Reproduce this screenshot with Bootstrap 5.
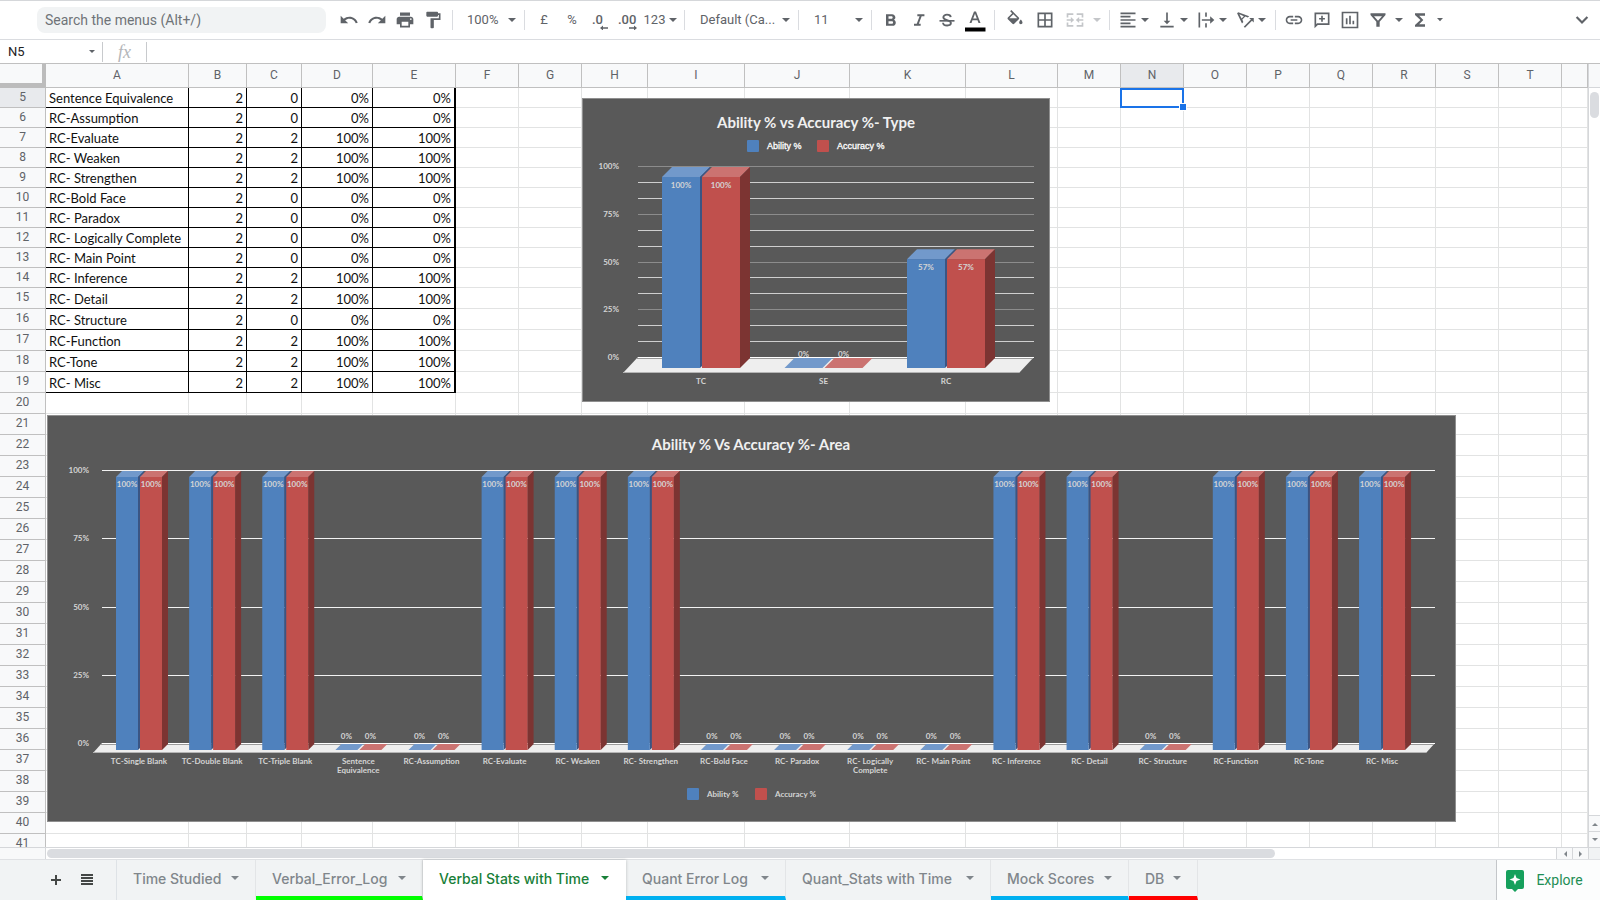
<!DOCTYPE html>
<html lang="en">
<head>
<meta charset="utf-8">
<meta name="viewport" content="width=device-width, initial-scale=1">
<title>Verbal Stats with Time</title>
<link href="https://cdn.jsdelivr.net/npm/bootstrap@5.3.0/dist/css/bootstrap.min.css" rel="stylesheet">
<style>
  body { font-family: Roboto, "Liberation Sans", sans-serif; font-size: 14px; color: #5f6368; }
  button, select, input { font-family: inherit; }
  .plain { border: 0; background: none; padding: 0; color: inherit; display: flex; align-items: center; justify-content: center; }

  /* toolbar */
  .toolbar { height: 40px; border-top: 1px solid #d5d7da; border-bottom: 1px solid #dadce0; padding-left: 37px; }
  .menu-search { width: 289px; height: 26px; border: 0; border-radius: 8px; background: #f1f3f4; padding: 0 8px; font-size: 14px; line-height: 26px; margin-right: 9px; color: #5f6368; }
  .menu-search::placeholder { color: #6f7378; opacity: 1; }
  .tool { width: 28px; height: 28px; flex: none; font-size: 13px; }
  .tool-wide { width: 30px; }
  .tool-split { width: 39px; justify-content: flex-start; padding-left: 3px; }
  .tool-num { width: 37px; }
  .tool-caret { width: 14px; }
  .tool-more { width: 36px; }
  .tool svg { width: 20px; height: 20px; fill: currentColor; flex: none; }
  .tool svg.tri { width: 8px; height: 4px; }
  .tool-split svg.tri { margin-left: 3px; }
  .tool.dim { color: #c4c6c9; }
  .tb-sep { width: 1px; height: 20px; background: #dadce0; margin: 0 5px; flex: none; }
  .picker { appearance: none; border: 0; background: url("data:image/svg+xml,%3Csvg xmlns='http://www.w3.org/2000/svg' viewBox='0 0 8 4'%3E%3Cpath d='M0 0h8L4 4z' fill='%235f6368'/%3E%3C/svg%3E") no-repeat right 3px center / 8px 4px; color: #5f6368; font-size: 13px; padding: 0 14px 0 10px; height: 28px; flex: none; }
  .picker-zoom { width: 61px; padding-left: 9px; }
  .picker-font { width: 103px; }
  .picker-size { width: 62px; }

  /* formula bar */
  .formula { height: 24px; border-bottom: 1px solid #c0c0c0; }
  .name-box { width: 102px; height: 22px; background-position: right 7px center; background-size: 6px 3px; color: #222; font-size: 13px; padding-left: 8px; }
  .formula .bar { width: 1px; height: 20px; background: #c8cacd; }
  .fx { width: 43px; font: italic 18px/20px "Liberation Serif", serif; color: #b4b6b9; text-align: center; }
  .formula input { border: 0; outline: 0; height: 20px; }

  /* grid */
  .sheet { overflow: hidden; border-bottom: 1px solid #d5d7da; }
  .cells { table-layout: fixed; width: 100%; border-collapse: separate; border-spacing: 0; }
  .cells th { background: #f8f9fa; font-weight: 400; font-size: 12px; line-height: 10px; text-align: center; vertical-align: top; padding: 4px 0 0; border-right: 1px solid #c0c0c0; border-bottom: 1px solid #c0c0c0; }
  .cells thead th { height: 24px; padding-top: 6px; }
  .cells th.picked { background: #e8eaed; }
  .cells thead th.corner { border-right: 4px solid #bcbcbc; border-bottom: 5px solid #bcbcbc; }
  .cells td { height: 20px; padding: 0 3px; line-height: 18px; vertical-align: bottom; white-space: nowrap; overflow: hidden; border-right: 1px solid #e2e3e3; border-bottom: 1px solid #e2e3e3; font-family: Lato, sans-serif; font-size: 13px; color: #111; }
  .cells tr.tall td { height: 21px; }
  .cells td.filled { border-color: #000; }
  .cells td.edge { border-right: 2px solid #000; }
  .cells td.num { text-align: right; }
  .cells td.active-cell { position: relative; overflow: visible; }
  .cells td.active-cell::before { content: ""; position: absolute; inset: 0 -1px -1px -1px; border: 2px solid #1a73e8; }
  .cells td.active-cell::after { content: ""; position: absolute; right: -4px; bottom: -4px; width: 6px; height: 6px; background: #1a73e8; border: 1px solid #fff; box-sizing: content-box; }
  .chart-object { position: absolute; background: #595959; border: 1px solid #8f8f8f; }
  .chart-object svg { display: block; }
  .chart-type { left: 582px; top: 34px; }
  .chart-area { left: 47px; top: 351px; }
  .chart-object text { font-family: Lato, sans-serif; font-size: 8px; font-weight: 700; fill: #d4d4d4; }
  .chart-object .heading { font-size: 15px; font-weight: 700; fill: #f0f0f0; }
  .chart-object .key { font-family: "Liberation Sans", sans-serif; font-size: 9px; font-weight: 400; fill: #fff; stroke: #fff; stroke-width: .3px; }

  /* scrollbars */
  .v-scroll { width: 12px; border-left: 1px solid #d5d7da; border-bottom: 1px solid #d5d7da; background: #fff; }
  .v-head { height: 24px; background: #f8f9fa; border-bottom: 1px solid #d5d7da; }
  .thumb { background: #dadce0; border-radius: 6px; }
  .v-scroll .thumb { width: 9px; height: 26px; margin: 4px 1px; }
  .v-scroll .plain { height: 16px; border-top: 1px solid #d5d7da; background: #f8f9fa; }
  .h-scroll { height: 12px; border-bottom: 1px solid #dfe1e4; }
  .h-head { width: 46px; background: #f8f9fa; border-right: 1px solid #d5d7da; }
  .h-scroll .thumb { width: 81.3%; height: 9px; margin: 1px; }
  .h-scroll .plain { width: 16px; border-left: 1px solid #d5d7da; background: #f8f9fa; }
  .h-end { width: 12px; border-left: 1px solid #d5d7da; background: #f1f3f4; }
  .v-scroll svg, .h-scroll svg { width: 6px; height: 6px; fill: #80868b; }

  /* sheet tabs */
  .tabs { height: 40px; background: #f1f3f4; }
  .tab-tools { width: 117px; padding-left: 40px; }
  .tab-tools .plain { width: 31px; }
  .sheet-tab { --mark-color: transparent; font-family: Inter, Roboto, sans-serif; font-size: 14px; font-weight: 500; color: #80868b; padding: 0 16px; justify-content: space-between; border-right: 1px solid #e3e5e7; border-bottom: 4px solid var(--mark-color); white-space: nowrap; }
  .sheet-tab svg { width: 8px; height: 4px; fill: currentColor; }
  .sheet-tab.current { background: #fff; color: #188038; border-color: #fff; box-shadow: 0 0 3px rgba(60,64,67,.3); }
  .mark-green { --mark-color: #00ff00; }
  .mark-blue { --mark-color: #00b0f0; }
  .mark-red { --mark-color: #ff0000; }
  .explore { width: 104px; background: #fcfdfd; border-left: 1px solid #c4c6c9; color: #1e8e55; font-size: 14px; gap: 12px; padding: 1px 8px 0 0; }
</style>
</head>
<body class="vh-100 d-flex flex-column overflow-hidden bg-white">

<header class="toolbar d-flex align-items-center flex-shrink-0">
  <input class="menu-search" type="text" placeholder="Search the menus (Alt+/)" aria-label="Search the menus">
  <button class="plain tool" aria-label="Undo"><svg viewBox="0 0 24 24"><path d="M12.5 8c-2.650 0-5.050.99-6.900 2.600L2 7v9h9l-3.620-3.620c1.390-1.160 3.160-1.880 5.120-1.880 3.540 0 6.550 2.310 7.600 5.500l2.370-.78C21.080 11.030 17.150 8 12.500 8z"/></svg></button>
  <button class="plain tool" aria-label="Redo"><svg viewBox="0 0 24 24"><path d="M18.400 10.600C16.550 8.990 14.150 8 11.500 8c-4.650 0-8.580 3.030-9.960 7.220L3.900 16c1.050-3.190 4.050-5.500 7.600-5.500 1.950 0 3.730.72 5.120 1.880L13 16h9V7l-3.600 3.600z"/></svg></button>
  <button class="plain tool" aria-label="Print"><svg viewBox="0 0 24 24"><path d="M19 8H5c-1.660 0-3 1.340-3 3v6h4v4h12v-4h4v-6c0-1.660-1.340-3-3-3zm-3 11H8v-5h8v5zm3-7c-.55 0-1-.45-1-1s.45-1 1-1 1 .45 1 1-.45 1-1 1zm-1-9H6v4h12V3z"/></svg></button>
  <button class="plain tool" aria-label="Paint format"><svg viewBox="0 0 24 24"><path d="M18 4V3c0-.55-.45-1-1-1H5c-.55 0-1 .45-1 1v4c0 .55.45 1 1 1h12c.55 0 1-.45 1-1V6h1v4H9v11c0 .55.45 1 1 1h2c.55 0 1-.45 1-1v-9h8V4h-3z"/></svg></button>
  <span class="tb-sep"></span>
  <select class="picker picker-zoom" aria-label="Zoom"><option>100%</option></select>
  <span class="tb-sep"></span>
  <button class="plain tool" aria-label="Format as currency">£</button>
  <button class="plain tool" aria-label="Format as percent">%</button>
  <button class="plain tool" aria-label="Decrease decimal places"><svg viewBox="0 0 20 20"><text x="2" y="14" font-size="13" font-weight="500">.0</text><path d="M10 18l3-2.500v1.800h5v1.400h-5v1.800z"/></svg></button>
  <button class="plain tool" aria-label="Increase decimal places"><svg viewBox="0 0 20 20"><text x="0" y="14" font-size="13" font-weight="500">.00</text><path d="M19 18l-3-2.500v1.800h-5v1.400h5v1.800z"/></svg></button>
  <button class="plain tool tool-num" aria-label="More formats">123<svg class="tri ms-1" viewBox="0 0 8 4"><path d="M0 0h8L4 4z"/></svg></button>
  <span class="tb-sep"></span>
  <select class="picker picker-font" aria-label="Font"><option>Default (Ca...</option></select>
  <span class="tb-sep"></span>
  <select class="picker picker-size" aria-label="Font size"><option>11</option></select>
  <span class="tb-sep"></span>
  <button class="plain tool" aria-label="Bold"><svg viewBox="0 0 24 24"><path d="M15.600 11.790c.97-.67 1.650-1.770 1.650-2.790 0-2.260-1.750-4-4-4H6v14h8.040c2.090 0 3.710-1.700 3.710-3.790 0-1.520-.86-2.820-2.150-3.420zM9 7.500h3.500c.83 0 1.500.67 1.500 1.500s-.67 1.500-1.500 1.500H9v-3zm4 9H9v-3h4c.83 0 1.500.67 1.500 1.500s-.67 1.500-1.500 1.500z"/></svg></button>
  <button class="plain tool" aria-label="Italic"><svg viewBox="0 0 24 24"><path d="M10 5v2.500h2.700l-3.400 9H6V19h8v-2.500h-2.200l3.400-9H18.500V5z"/></svg></button>
  <button class="plain tool" aria-label="Strikethrough"><svg viewBox="0 0 24 24"><path d="M3 12h18v2H3z"/><path d="M16.500 8.600C16.300 6.700 14.600 5.600 12 5.600S7.600 6.900 7.600 8.800c0 1.600 1.400 2.600 4.400 3.400s4.700 1.700 4.700 3.500c0 1.700-1.700 2.900-4.500 2.900s-4.900-1.200-5-3.300" fill="none" stroke="currentColor" stroke-width="2.200"/></svg></button>
  <button class="plain tool" aria-label="Text colour"><svg viewBox="0 0 20 20" overflow="visible"><path d="M9 1.500h2L15.500 13h-2l-1-2.800h-5l-1 2.800h-2zM10 3.800L8.200 8.600h3.600z"/><path d="M0 17.500h20.500v4H0z" fill="#000"/></svg></button>
  <span class="tb-sep"></span>
  <button class="plain tool tool-wide" aria-label="Fill colour"><svg viewBox="0 0 24 24"><path d="M16.560 8.940L7.620 0 6.210 1.410l2.380 2.380-5.150 5.150c-.59.59-.59 1.540 0 2.120l5.500 5.500c.29.29.68.44 1.060.44s.77-.15 1.060-.44l5.500-5.500c.59-.58.59-1.530 0-2.120zM5.210 10L10 5.210 14.790 10H5.210zM19 11.500s-2 2.170-2 3.500c0 1.100.9 2 2 2s2-.9 2-2c0-1.330-2-3.500-2-3.500z"/></svg></button>
  <button class="plain tool tool-wide" aria-label="Borders"><svg viewBox="0 0 24 24"><path d="M3 3v18h18V3H3zm8 16H5v-6h6v6zm0-8H5V5h6v6zm8 8h-6v-6h6v6zm0-8h-6V5h6v6z"/></svg></button>
  <button class="plain tool tool-wide dim" aria-label="Merge cells"><svg viewBox="0 0 24 24"><path d="M2 4h8v2H4v3H2zM22 4h-8v2h6v3h2zM2 20h8v-2H4v-3H2zM22 20h-8v-2h6v-3h2zM2 11h5V8.500l4 3.500-4 3.500V13H2zM22 11h-5V8.500L13 12l4 3.500V13h5z"/></svg></button>
  <button class="plain tool tool-caret dim" aria-label="Merge type"><svg class="tri" viewBox="0 0 8 4"><path d="M0 0h8L4 4z"/></svg></button>
  <span class="tb-sep"></span>
  <button class="plain tool tool-split" aria-label="Horizontal align"><svg viewBox="0 0 24 24"><path d="M15 15H3v2h12v-2zm0-8H3v2h12V7zM3 13h18v-2H3v2zm0 8h18v-2H3v2zM3 3v2h18V3H3z"/></svg><svg class="tri" viewBox="0 0 8 4"><path d="M0 0h8L4 4z"/></svg></button>
  <button class="plain tool tool-split" aria-label="Vertical align"><svg viewBox="0 0 24 24"><path d="M16 13h-3V3h-2v10H8l4 4 4-4zM4 19v2h16v-2H4z"/></svg><svg class="tri" viewBox="0 0 8 4"><path d="M0 0h8L4 4z"/></svg></button>
  <button class="plain tool tool-split" aria-label="Text wrapping"><svg viewBox="0 0 24 24"><path d="M3 3h2v18H3zM11 3h2v5h-2zM11 16h2v5h-2zM7 11h10V7.500l5 4.500-5 4.500V13H7z"/></svg><svg class="tri" viewBox="0 0 8 4"><path d="M0 0h8L4 4z"/></svg></button>
  <button class="plain tool tool-split" aria-label="Text rotation"><svg viewBox="0 0 24 24"><path d="M2.500 4l1.400-1.400L17 7.500l-1.600 1.600-3-1.200-3.600 3.600 1.200 3-1.600 1.600zM5.300 5.200l2.600 4.900 2.700-2.700zM10.500 20L19 11.500 17 9.500h5.500V15l-2.100-2.100L12 21.400z"/></svg><svg class="tri" viewBox="0 0 8 4"><path d="M0 0h8L4 4z"/></svg></button>
  <span class="tb-sep ms-1 me-1"></span>
  <button class="plain tool" aria-label="Insert link"><svg viewBox="0 0 24 24"><path d="M3.900 12c0-1.710 1.390-3.100 3.100-3.100h4V7H7c-2.760 0-5 2.240-5 5s2.240 5 5 5h4v-1.900H7c-1.710 0-3.100-1.390-3.100-3.100zM8 13h8v-2H8v2zm9-6h-4v1.900h4c1.710 0 3.100 1.390 3.100 3.100s-1.390 3.100-3.100 3.100h-4V17h4c2.760 0 5-2.240 5-5s-2.240-5-5-5z"/></svg></button>
  <button class="plain tool" aria-label="Insert comment"><svg viewBox="0 0 24 24"><path fill-rule="evenodd" d="M3 3h18v15H7l-4 4zM5 5v12l1-1h13V5zM11 7h2v2.500h2.500v2H13V14h-2v-2.500H8.500v-2H11z"/></svg></button>
  <button class="plain tool" aria-label="Insert chart"><svg viewBox="0 0 24 24"><path fill-rule="evenodd" d="M2 2h20v20H2zM4 4v16h16V4zM7 10h2v7H7zM11 7h2v10h-2zM15 13h2v4h-2z"/></svg></button>
  <button class="plain tool" aria-label="Create a filter"><svg viewBox="0 0 24 24"><path fill-rule="evenodd" d="M3 4h18v2l-7 8v6h-4v-6L3 6zM7.200 7.500l4.800 5.400 4.800-5.400z"/></svg></button>
  <button class="plain tool tool-caret" aria-label="Filter views"><svg class="tri" viewBox="0 0 8 4"><path d="M0 0h8L4 4z"/></svg></button>
  <button class="plain tool" aria-label="Functions"><svg viewBox="0 0 24 24"><path d="M18 4H6v2l6.500 6L6 18v2h12v-3h-7l5-5-5-5h7z"/></svg></button>
  <button class="plain tool tool-caret" aria-label="More functions"><svg class="tri" viewBox="0 0 12 6"><path d="M0 0h9L4.500 5z"/></svg></button>
  <button class="plain tool tool-more ms-auto" aria-label="Hide the menus"><svg viewBox="0 0 24 24"><path d="M5.500 8.500L12 15l6.500-6.500" fill="none" stroke="currentColor" stroke-width="2.600"/></svg></button>
</header>

<div class="formula d-flex align-items-center flex-shrink-0">
  <select class="picker name-box" aria-label="Name box"><option>N5</option></select>
  <span class="bar"></span>
  <label class="fx" for="formula">fx</label>
  <span class="bar"></span>
  <input id="formula" class="flex-fill" type="text">
</div>

<main class="d-flex flex-fill overflow-hidden">
  <div class="sheet position-relative flex-fill">
    <table class="cells" id="cells"></table>
    <figure class="chart-object chart-type m-0" id="chartType"></figure>
    <figure class="chart-object chart-area m-0" id="chartArea"></figure>
  </div>
  <div class="v-scroll d-flex flex-column flex-shrink-0">
    <div class="v-head"></div>
    <div class="thumb"></div>
    <button class="plain mt-auto" aria-label="Scroll up"><svg viewBox="0 0 6 6"><path d="M0 5h6L3 2z"/></svg></button>
    <button class="plain" aria-label="Scroll down"><svg viewBox="0 0 6 6"><path d="M0 1h6L3 4z"/></svg></button>
  </div>
</main>

<div class="h-scroll d-flex flex-shrink-0">
  <div class="h-head"></div>
  <div class="flex-fill"><div class="thumb"></div></div>
  <button class="plain" aria-label="Scroll left"><svg viewBox="0 0 6 6"><path d="M5 0v6L2 3z"/></svg></button>
  <button class="plain" aria-label="Scroll right"><svg viewBox="0 0 6 6"><path d="M1 0v6l3-3z"/></svg></button>
  <div class="h-end"></div>
</div>

<footer class="tabs d-flex flex-shrink-0">
  <div class="tab-tools d-flex border-end">
    <button class="plain" aria-label="Add sheet"><svg width="12" height="12" viewBox="0 0 12 12"><path d="M5 1h2v4h4v2H7v4H5V7H1V5h4z" fill="#444746"/></svg></button>
    <button class="plain" aria-label="All sheets"><svg width="12" height="12" viewBox="0 0 12 12"><path d="M0 0h12v2H0zM0 3h12v2H0zM0 6h12v2H0zM0 9h12v2H0z" fill="#444746"/></svg></button>
  </div>
  <nav class="d-flex" id="tabs" aria-label="Sheets"></nav>
  <button class="plain explore ms-auto"><svg width="18" height="22" viewBox="0 0 18 22"><path d="M2 0h14a2 2 0 0 1 2 2v15a2 2 0 0 1-2 2h-4l-3 3-3-3H2a2 2 0 0 1-2-2V2a2 2 0 0 1 2-2z" fill="#16a05c"/><path d="M9 4l1.500 4L14.500 9.500 10.500 11 9 15l-1.500-4L3.500 9.500 7.500 8z" fill="#fff"/></svg>Explore</button>
</footer>

<script src="https://cdn.jsdelivr.net/npm/bootstrap@5.3.0/dist/js/bootstrap.bundle.min.js"></script>
<script>
  const columns = [['A',143],['B',58],['C',55],['D',71],['E',83],['F',63],['G',63],['H',66],['I',97],['J',105],['K',116],['L',92],
    ['M',63],['N',63],['O',63],['P',63],['Q',63],['R',63],['S',63],['T',63],['',0]];
  const areas = [['Sentence Equivalence',0],['RC-Assumption',0],['RC-Evaluate',2],['RC- Weaken',2],['RC- Strengthen',2],['RC-Bold Face',0],
    ['RC- Paradox',0],['RC- Logically Complete',0],['RC- Main Point',0],['RC- Inference',2],['RC- Detail',2],['RC- Structure',0],
    ['RC-Function',2],['RC-Tone',2],['RC- Misc',2]];

  let html = '<colgroup><col style="width:46px">' + columns.map(c => c[1] ? `<col style="width:${c[1]}px">` : '<col>').join('') + '</colgroup>';
  html += '<thead><tr><th class="corner"></th>' + columns.map(c => `<th class="${c[0] === 'N' ? 'picked' : ''}">${c[0]}</th>`).join('') + '</tr></thead><tbody>';
  for (let r = 5; r <= 41; r++) {
    html += `<tr class="${r > 14 ? 'tall' : ''}"><th class="${r === 5 ? 'picked' : ''}">${r}</th>`;
    const a = areas[r - 5];
    const values = a ? [a[0], 2, a[1], a[1] * 50 + '%', a[1] * 50 + '%'] : [];
    columns.forEach((c, i) => {
      const cls = [];
      if (a && i < 5) cls.push('filled');
      if (a && i === 4) cls.push('edge');
      if (i > 0) cls.push('num');
      if (r === 5 && c[0] === 'N') cls.push('active-cell');
      html += `<td class="${cls.join(' ')}">${values[i] ?? ''}</td>`;
    });
    html += '</tr>';
  }
  document.getElementById('cells').innerHTML = html + '</tbody>';

  const series = [
    { name: 'Ability %', front: '#4f81bd', top: '#7299cb', side: '#3a5584' },
    { name: 'Accuracy %', front: '#c0504d', top: '#cb7371', side: '#7c3432' }
  ];
  const poly = (pts, fill) => `<polygon points="${pts.map(p => p.join(',')).join(' ')}" fill="${fill}"/>`;
  const label = (x, y, s, cls = '', anchor = 'middle') => `<text x="${x}" y="${y}" text-anchor="${anchor}" class="${cls}">${s}</text>`;

  // Draws a clustered column chart with a shallow 3D depth.
  function drawChart(o) {
    let s = `<svg width="${o.w}" height="${o.h}" viewBox="1 1 ${o.w} ${o.h}" role="img" aria-label="${o.title}">`;
    s += label(o.titleX, o.titleY, o.title, 'heading');
    o.keys.forEach((x, i) => {
      s += `<rect x="${x}" y="${o.keyY}" width="12" height="12" rx="1" fill="${series[i].front}"/>`;
      s += label(x + 20, o.keyY + 9, series[i].name, o.keyClass, 'start');
    });
    const span = o.base - o.peak;
    for (let i = 1; i <= o.lines; i++) {
      const y = Math.round(o.base - span * i / o.lines);
      const major = i % (o.lines / 4) === 0;
      s += `<rect x="${o.left}" y="${y}" width="${o.right - o.left}" height="1" fill="${major ? o.major : '#cfcfcf'}"/>`;
    }
    for (let i = 0; i <= 4; i++) s += label(o.axisX, Math.round(o.base - span * i / 4) + 3, i * 25 + '%', '', 'end');
    s += poly([[o.left, o.base], [o.right, o.base], [o.right - o.floor, o.floorY], [o.left - o.floor, o.floorY]], '#eeeeee');
    s += `<rect x="${o.left}" y="${o.base}" width="${o.right - o.left}" height="1" fill="#fff"/><rect x="${o.left - 1}" y="${o.base + 1}" width="${o.right - o.left}" height="1" fill="#9a9a9a"/>`;
    s += `<rect x="${o.left - o.floor}" y="${o.floorY - 1}" width="${o.right - o.left}" height="1" fill="#b5b5b5"/>`;
    const d = o.depth, foot = o.base + d + 1;
    o.data.forEach(([name, value], i) => {
      const x0 = o.first + o.step * i;
      series.forEach((c, k) => {
        const x = x0 + k * (o.bar + 2), e = x + o.bar, t = foot - span * value / 100;
        s += poly([[x, t], [x + d, t - d], [e + d, t - d], [e, t]], c.top);
        if (value) {
          s += poly([[e, t], [e + d, t - d], [e + d, foot - d], [e, foot]], c.side);
          s += `<rect x="${x}" y="${t}" width="${o.bar}" height="${foot - t}" fill="${c.front}"/>`;
        }
        s += label(x + o.bar / 2, value ? t + o.labelGap : o.zeroY, value + '%');
      });
      name.split('|').forEach((part, n) => s += label(x0 + o.bar + 1, o.nameY + n * 9, part));
    });
    return s + '</svg>';
  }

  document.getElementById('chartType').innerHTML = drawChart({
    w: 466, h: 302, title: 'Ability % vs Accuracy %- Type', titleX: 234, titleY: 30, keys: [165, 235], keyY: 42, keyClass: 'key',
    left: 56, right: 452, peak: 68, base: 259, lines: 12, major: '#8c8c8c', axisX: 37, floor: 15, floorY: 275, depth: 10, labelGap: 11,
    first: 80, step: 122.5, bar: 38, zeroY: 259, nameY: 286, data: [['TC', 100], ['SE', 0], ['RC', 57]]
  });
  document.getElementById('chartArea').innerHTML = drawChart({
    w: 1407, h: 405, title: 'Ability % Vs Accuracy %- Area', titleX: 704, titleY: 35, keys: [640, 708], keyY: 373, keyClass: '',
    left: 55, right: 1388, peak: 55, base: 328, lines: 4, major: '#f2f2f2', axisX: 42, floor: 9, floorY: 338, depth: 6, labelGap: 10,
    first: 69, step: 73.12, bar: 22, zeroY: 324, nameY: 349,
    data: [['TC-Single Blank', 100], ['TC-Double Blank', 100], ['TC-Triple Blank', 100],
      ...areas.map(a => [a[0].replace('Sentence ', 'Sentence|').replace('Logically ', 'Logically|'), a[1] * 50])]
  });

  const tabs = [['Time Studied','',139],['Verbal_Error_Log','mark-green',167],['Verbal Stats with Time','current',203],['Quant Error Log','mark-blue',160],
    ['Quant_Stats with Time','',205],['Mock Scores','mark-blue',138],['DB','mark-red',69]];
  document.getElementById('tabs').innerHTML = tabs.map(t =>
    `<button class="plain sheet-tab ${t[1]}" style="width:${t[2]}px">${t[0]}<svg viewBox="0 0 8 4"><path d="M0 0h8L4 4z"/></svg></button>`).join('');
</script>
</body>
</html>
